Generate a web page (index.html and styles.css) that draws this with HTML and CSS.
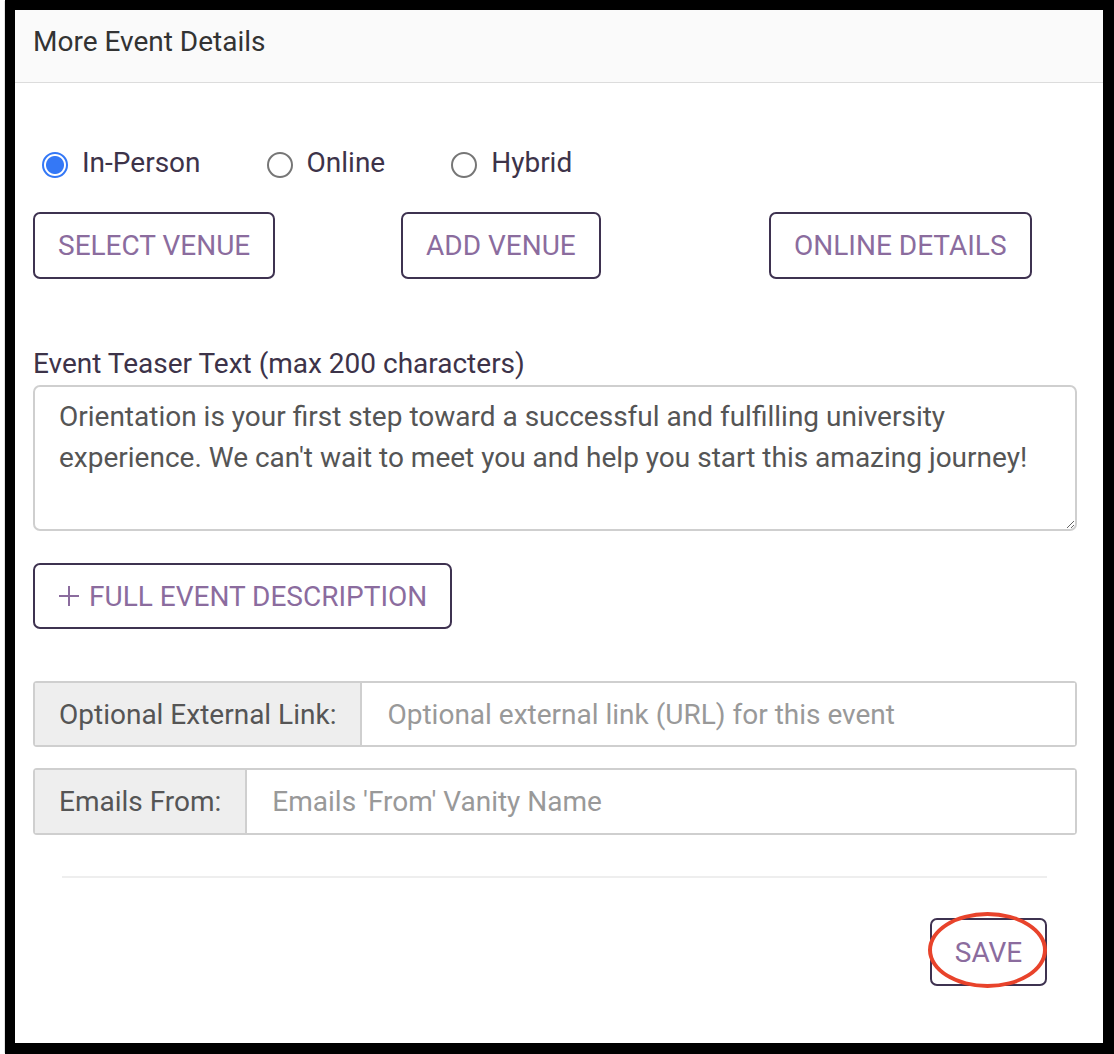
FILE: index.html
```html
<!DOCTYPE html>
<html lang="en">
<head>
<meta charset="utf-8">
<title>More Event Details</title>
<link rel="stylesheet" href="styles.css">
</head>
<body>
<div class="frame">
  <div class="panel-header">More Event Details</div>
  <div class="panel-body">
    <div class="radio-row">
      <label class="radio-item"><input type="radio" name="mode" checked><span>In-Person</span></label>
      <label class="radio-item"><input type="radio" name="mode"><span>Online</span></label>
      <label class="radio-item"><input type="radio" name="mode"><span>Hybrid</span></label>
    </div>
    <div class="venue-row">
      <div class="venue-col"><button class="btn">SELECT VENUE</button></div>
      <div class="venue-col"><button class="btn">ADD VENUE</button></div>
      <div class="venue-col"><button class="btn">ONLINE DETAILS</button></div>
    </div>
    <label class="field-label" for="teaser">Event Teaser Text (max 200 characters)</label>
    <textarea id="teaser" class="teaser">Orientation is your first step toward a successful and fulfilling university experience. We can't wait to meet you and help you start this amazing journey!</textarea>
    <button class="btn btn-full"><svg class="plus" viewBox="0 0 22 22" width="22" height="22"><path d="M11 1V21M1 11H21" stroke="#8b6c9e" stroke-width="2" fill="none"/></svg>FULL EVENT DESCRIPTION</button>
    <div class="input-group group-link">
      <span class="addon">Optional External Link:</span>
      <input class="control" type="text" placeholder="Optional external link (URL) for this event">
    </div>
    <div class="input-group group-email">
      <span class="addon">Emails From:</span>
      <input class="control" type="text" placeholder="Emails 'From' Vanity Name">
    </div>
    <div class="divider"></div>
    <div class="footer">
      <button class="btn btn-save">SAVE<span class="highlight"></span></button>
    </div>
  </div>
</div>
</body>
</html>
```

FILE: styles.css
```css
* { box-sizing: border-box; }

html, body {
  margin: 0;
  padding: 0;
  background: #fff;
  font-family: Roboto, "Liberation Sans", Arial, sans-serif;
}

body {
  border-left: 2px solid #fff;
}

.frame {
  position: relative;
  margin-left: 3px;
  width: 1109px;
  height: 1054px;
  border-style: solid;
  border-color: #000;
  border-width: 10px 11px 11px 10px;
  background: #fff;
  overflow: hidden;
  box-shadow: -2px 0 0 -1px #e2e2e2;
}

.panel-header {
  height: 73px;
  padding: 12px 0 0 18px;
  background: #fafafa;
  border-bottom: 1px solid #dcdcdc;
  font-size: 28px;
  line-height: 40px;
  color: #333;
}

.panel-body {
  padding: 0 26px 0 18px;
  display: flex;
  flex-direction: column;
  align-items: flex-start;
}

.radio-row {
  margin-top: 60px;
  padding-left: 9px;
  display: flex;
  align-items: center;
  height: 40px;
}

.radio-item {
  display: flex;
  align-items: center;
  margin-right: 66px;
  font-size: 28px;
  line-height: 40px;
  color: #3d3349;
}

.radio-item input {
  appearance: none;
  -webkit-appearance: none;
  width: 26px;
  height: 26px;
  margin: 3px 14px 0 0;
  border: 2px solid #767676;
  border-radius: 50%;
  background: #fff;
}

.radio-item input:checked {
  border: 2px solid #3478f6;
  background: radial-gradient(circle, #3478f6 0 8.5px, #fff 9.5px);
}

.venue-row {
  margin-top: 29px;
  display: grid;
  grid-template-columns: 368px 368px auto;
}

.btn {
  display: inline-flex;
  align-items: center;
  justify-content: center;
  height: 67px;
  padding: 0 23px;
  border: 2px solid #3e3250;
  border-radius: 7px;
  background: #fff;
  font-family: Roboto, "Liberation Sans", Arial, sans-serif;
  font-size: 28px;
  color: #8b6c9e;
  cursor: pointer;
}

.field-label {
  margin-top: 70px;
  font-size: 28px;
  line-height: 30px;
  color: #3d3349;
}

.teaser {
  margin-top: 6px;
  width: 100%;
  height: 146px;
  padding: 10px 24px;
  border: 2px solid #cfcfcf;
  border-radius: 7px;
  font-family: Roboto, "Liberation Sans", Arial, sans-serif;
  font-size: 28px;
  line-height: 40.5px;
  color: #555;
  resize: vertical;
  outline: none;
}

.btn-full {
  margin-top: 32px;
  height: 66px;
}

.plus {
  margin-right: 9px;
}

.input-group {
  width: 100%;
  display: flex;
  border: 2px solid #cfcfcf;
  border-radius: 4px;
}

.group-link {
  margin-top: 52px;
  height: 66px;
}

.group-email {
  margin-top: 21px;
  height: 67px;
}

.addon {
  display: flex;
  align-items: center;
  padding: 0 24px;
  background: #eee;
  border-right: 2px solid #cfcfcf;
  font-size: 28px;
  color: #555;
  white-space: nowrap;
}

.control {
  flex: 1;
  min-width: 0;
  border: 0;
  padding: 0 25px;
  font-family: Roboto, "Liberation Sans", Arial, sans-serif;
  font-size: 28px;
  color: #555;
  outline: none;
  background: #fff;
}

.control::placeholder {
  color: #999;
}

.divider {
  margin: 41px 30px 0 29px;
  align-self: stretch;
  height: 2px;
  background: #eee;
}

.footer {
  align-self: stretch;
  margin-top: 40px;
  padding-right: 30px;
  display: flex;
  justify-content: flex-end;
}

.btn-save {
  position: relative;
  width: 117px;
  height: 68px;
  padding: 0;
}

.highlight {
  position: absolute;
  left: -4px;
  top: -8px;
  width: 119px;
  height: 76px;
  border: 4px solid #e8432b;
  border-radius: 50%;
  pointer-events: none;
}
```
